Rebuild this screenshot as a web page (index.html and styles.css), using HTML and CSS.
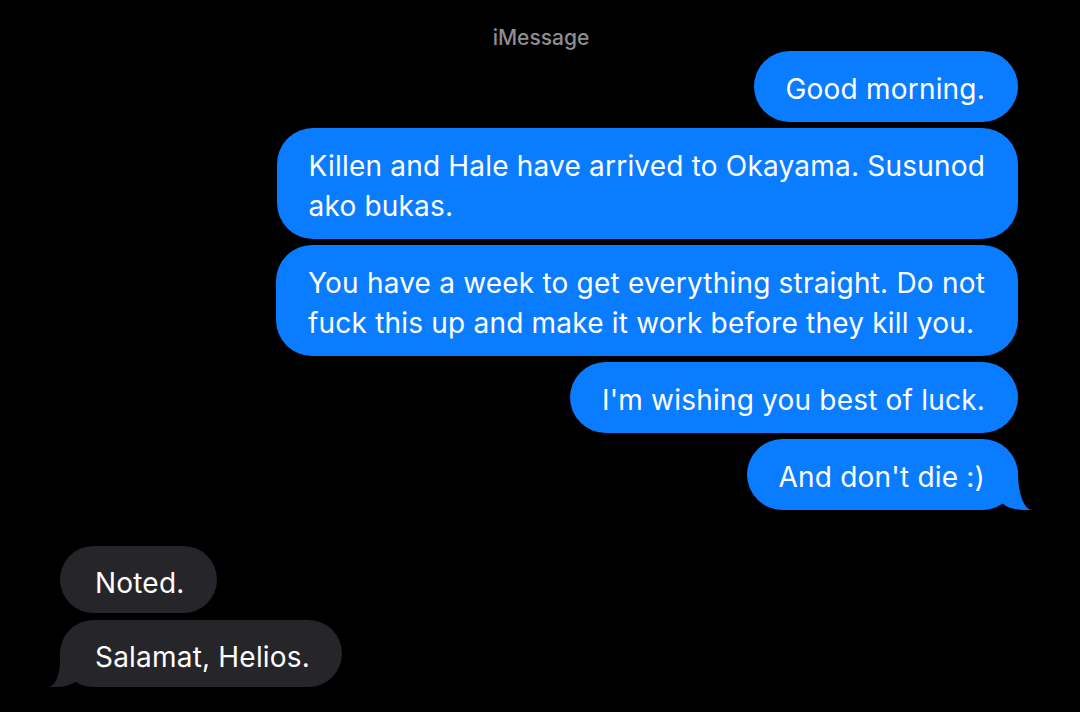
FILE: index.html
```html
<!DOCTYPE html>
<html lang="en">
<head>
<meta charset="utf-8">
<title>iMessage</title>
<link rel="stylesheet" href="styles.css">
</head>
<body>
<div class="screen">
  <div class="service">iMessage</div>
  <div class="thread">
    <div class="group sent">
      <div class="bubble">Good morning.</div>
      <div class="bubble">Killen and Hale have arrived to Okayama. Susunod<br>ako bukas.</div>
      <div class="bubble">You have a week to get everything straight. Do not<br>fuck this up and make it work before they kill you.</div>
      <div class="bubble">I'm wishing you best of luck.</div>
      <div class="bubble tail">And don't die :)</div>
    </div>
    <div class="group received">
      <div class="bubble">Noted.</div>
      <div class="bubble tail">Salamat, Helios.</div>
    </div>
  </div>
</div>
</body>
</html>
```

FILE: styles.css
```css
html, body {
  margin: 0;
  padding: 0;
  background: #000;
}

.screen {
  width: 1080px;
  height: 712px;
  overflow: hidden;
  font-family: Inter, "Liberation Sans", sans-serif;
  color: #fff;
}

.service {
  text-align: center;
  color: #8e8e93;
  font-size: 21px;
  font-weight: 500;
  line-height: 24px;
  padding-top: 26px;
  padding-left: 2px;
}

.thread {
  display: flex;
  flex-direction: column;
  gap: 36px;
  padding: 1px 62px 0 60px;
}

.group {
  display: flex;
  flex-direction: column;
  gap: 6px;
}

.sent {
  align-items: flex-end;
}

.received {
  align-items: flex-start;
  gap: 7px;
}

.bubble {
  position: relative;
  font-size: 28px;
  letter-spacing: 0.2px;
  line-height: 40px;
  padding: 18px 33px 13px 32px;
  border-radius: 36px;
  max-width: 780px;
}

.sent .bubble {
  background: #0a7cff;
}

.received .bubble {
  background: #262529;
  padding: 16.5px 32px 10.5px 35px;
}

.bubble.tail::before,
.bubble.tail::after {
  content: "";
  position: absolute;
  bottom: 0;
}

.sent .bubble.tail::before {
  right: -14px;
  width: 32px;
  height: 40px;
  background: #0a7cff;
  border-bottom-left-radius: 24px 12px;
}

.sent .bubble.tail::after {
  right: -40px;
  width: 40px;
  height: 44px;
  background: #000;
  border-bottom-left-radius: 14px 36px;
}

.received .bubble.tail::before {
  left: -12px;
  width: 30px;
  height: 36px;
  background: #262529;
  border-bottom-right-radius: 22px 10px;
}

.received .bubble.tail::after {
  left: -40px;
  width: 40px;
  height: 40px;
  background: #000;
  border-bottom-right-radius: 12px 26px;
}
```
